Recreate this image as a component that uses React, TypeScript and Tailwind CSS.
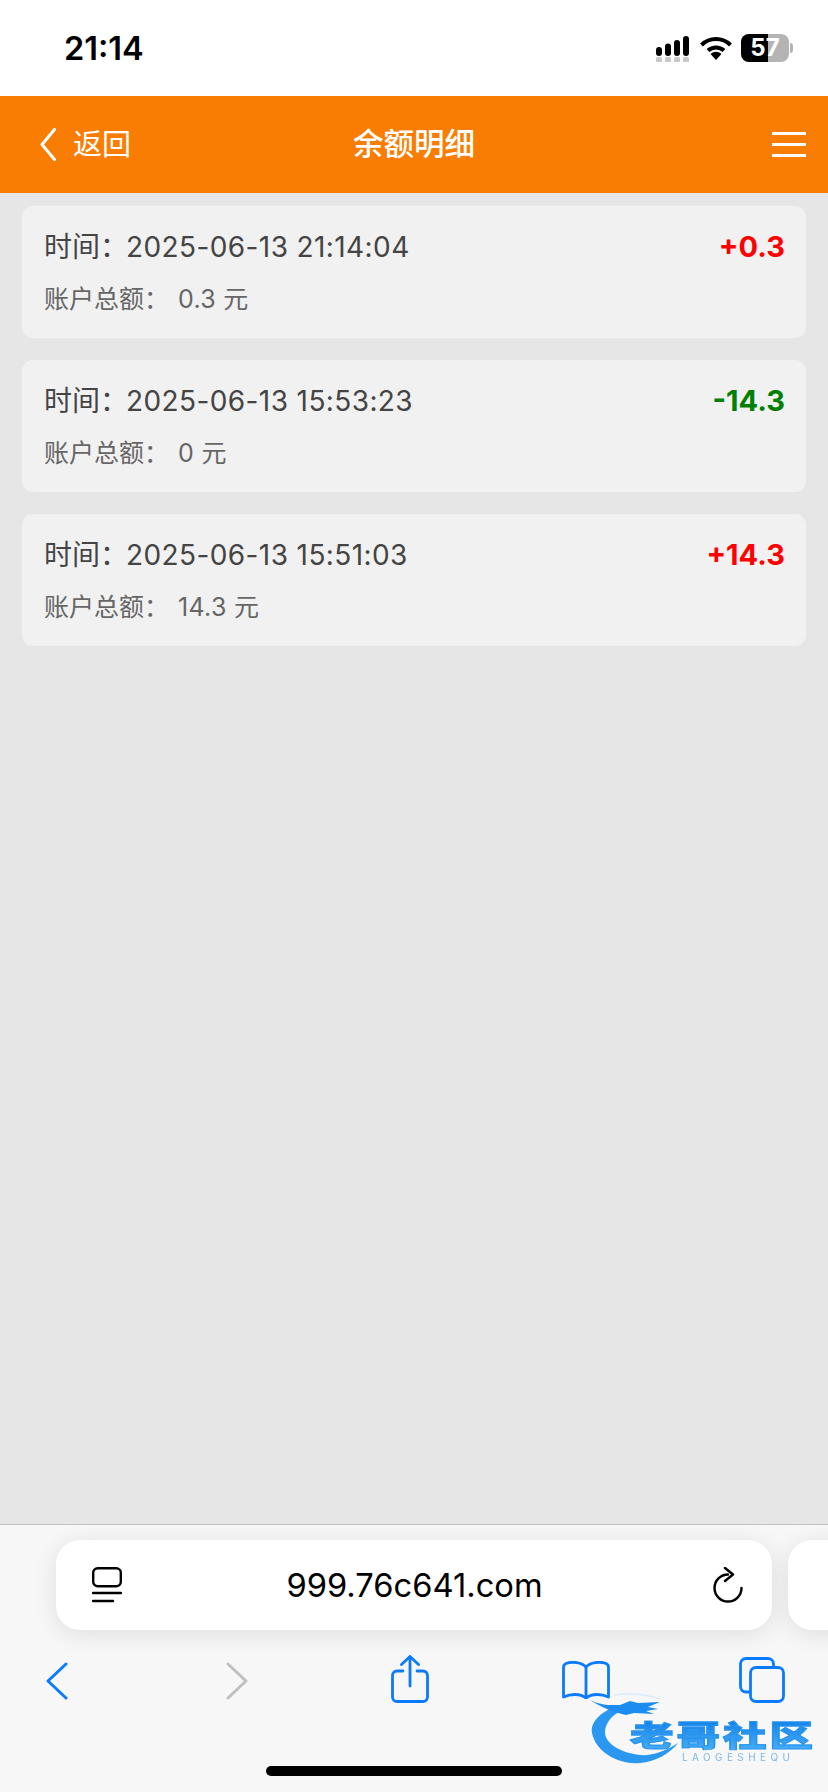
const records = [
  { time: "2025-06-13 21:14:04", amount: "+0.3", total: "0.3", up: true },
  { time: "2025-06-13 15:53:23", amount: "-14.3", total: "0", up: false },
  { time: "2025-06-13 15:51:03", amount: "+14.3", total: "14.3", up: true },
];

const fontStack = "font-['Inter','Noto_Sans_CJK_SC',sans-serif]";

function StatusIcons() {
  return (
    <div className="flex items-center">
      <svg width="33" height="26" viewBox="0 0 33 26" fill="#000" className="mt-[2px]">
        <rect x="0" y="11" width="6" height="9" rx="3" />
        <rect x="9" y="7.5" width="6" height="12.5" rx="3" />
        <rect x="18" y="4" width="6" height="16" rx="3" />
        <rect x="27" y="0" width="6" height="20" rx="3" />
        <g fill="#c8c8c8">
          <rect x="0" y="21" width="6" height="5.5" rx="1.5" />
          <rect x="9" y="21" width="6" height="5.5" rx="1.5" />
          <rect x="18" y="21" width="6" height="5.5" rx="1.5" />
          <rect x="27" y="21" width="6" height="5.5" rx="1.5" />
        </g>
      </svg>
      <svg width="32" height="24" viewBox="0 0 32 24" fill="none" stroke="#000" strokeWidth="4" className="ml-[11px]">
        <path d="M1.5 9 A20.5 20.5 0 0 1 30.5 9" />
        <path d="M8 14.5 A12 12 0 0 1 24 14.5" />
        <path d="M16 24 L10.5 18 A8 8 0 0 1 21.5 18 Z" fill="#000" stroke="none" />
      </svg>
      <div className="relative ml-[9px] flex h-[28px] w-[48px] items-center justify-center overflow-hidden rounded-[8px] bg-[#b4b4b4]">
        <div className="absolute inset-y-0 left-0 w-[27px] bg-black" />
        <span className="relative font-['Inter',sans-serif] text-[24px] leading-none font-bold text-white">57</span>
      </div>
      <div className="ml-[1px] h-[10px] w-[3px] rounded-r-full bg-[#b4b4b4]" />
    </div>
  );
}

function Watermark() {
  return (
    <div className="absolute top-[1693px] left-[590px] h-[74px] w-[224px] blur-[0.7px]">
      <svg width="100" height="74" viewBox="0 0 100 74" fill="none" className="absolute top-0 left-0">
        <path d="M30 12 C10 18 0 30 2 40 C6 60 30 72 50 70 C66 69 80 60 88 50 C76 58 62 63 50 62 C30 60 14 50 15 38 C16 28 24 20 36 16 Z" fill="#2a97f0" />
        <path d="M0 7 C12 13 22 12 30 12 L40 8 L48 10 L70 9 L58 14 L68 16 L56 18 L64 21 L44 20 L36 22 C26 20 10 14 0 7 Z" fill="#1d8cf0" />
        <path d="M24 2 C40 0 58 2 70 6" stroke="#dcebf8" strokeWidth="1.5" />
      </svg>
      <span className="absolute top-[26px] left-[40px] origin-left scale-x-[1.5] bg-gradient-to-b from-[#0b7fe8] to-[#43adf6] bg-clip-text font-['Noto_Sans_CJK_SC',sans-serif] text-[29px] leading-[30px] font-black tracking-[2px] whitespace-nowrap text-transparent [-webkit-text-stroke:1px_#2a93ee]">
        老哥社区
      </span>
      <span className="absolute top-[59px] left-[92px] font-['Inter',sans-serif] text-[10px] leading-[10px] tracking-[4.4px] whitespace-nowrap text-[#7db9ea]">
        LAOGESHEQU
      </span>
    </div>
  );
}

export default function App() {
  return (
    <div className={`relative flex h-[1792px] w-[828px] flex-col overflow-hidden bg-[#e6e6e6] ${fontStack}`}>
      <div className="flex h-[96px] shrink-0 items-center justify-between bg-white pr-[35px] pl-[64px]">
        <span className="mt-[2px] font-['Inter',sans-serif] text-[32.5px] leading-none font-semibold text-black">21:14</span>
        <StatusIcons />
      </div>

      <header className="relative flex h-[97px] shrink-0 items-center justify-between bg-[#f97d03] pr-[22px] pl-[40px] text-white">
        <div className="flex items-center gap-[17px]">
          <svg width="16" height="33" viewBox="0 0 16 33" fill="none" stroke="#fff" strokeWidth="3" strokeLinecap="round" strokeLinejoin="round">
            <path d="M14.5 1.5 L2 16.5 L14.5 31.5" />
          </svg>
          <span className="text-[29px] leading-none">返回</span>
        </div>
        <h1 className="absolute left-[353px] text-[30.5px] leading-none font-medium">余额明细</h1>
        <div className="flex w-[34px] flex-col gap-[8px]">
          <div className="h-[3px] bg-white" />
          <div className="h-[3px] bg-white" />
          <div className="h-[3px] bg-white" />
        </div>
      </header>

      <main className="flex flex-1 flex-col gap-[22px] px-[22px] pt-[13px]">
        {records.map((r) => (
          <div key={r.time} className="h-[132px] rounded-[11px] bg-[#f1f1f1] pt-[21px] pr-[21px] pl-[22px]">
            <div className="flex items-center justify-between">
              <span className="text-[28px] leading-[40px] text-[#444]">
                时间：<span className="-ml-[2px] tracking-[0.4px]">{r.time}</span>
              </span>
              <span className={`text-[29px] leading-[40px] font-bold ${r.up ? "text-[#ff0000]" : "text-[#008000]"}`}>
                {r.amount}
              </span>
            </div>
            <div className="mt-[16px] text-[25px] leading-[32px] text-[#666]">
              账户总额：<span className="ml-[9px] tracking-[0.3px]">{r.total} 元</span>
            </div>
          </div>
        ))}
      </main>

      <div className="h-[268px] shrink-0 border-t border-[#c4c4c4] bg-[#f7f7f7]">
        <div className="flex gap-[16px] pt-[15px] pl-[56px]">
          <div className="flex h-[90px] w-[716px] shrink-0 items-center justify-between rounded-[24px] bg-white pr-[29px] pl-[36px] shadow-[0_4px_24px_rgba(0,0,0,0.10)]">
            <svg width="30" height="36" viewBox="0 0 30 36" fill="none" stroke="#000" strokeWidth="2.4" strokeLinecap="round">
              <rect x="1.2" y="1.2" width="27.6" height="18" rx="4.5" />
              <path d="M1 26 H29" />
              <path d="M1 34 H21" />
            </svg>
            <span className="-ml-[6px] text-[32.7px] leading-none text-black">999.76c641.com</span>
            <svg width="30" height="37" viewBox="0 0 30 37" fill="none" stroke="#000" strokeWidth="2.4" strokeLinecap="round" strokeLinejoin="round">
              <path d="M15 7.5 A13.5 13.5 0 1 0 28.5 21" />
              <path d="M12 1 L20 7.5 L12 14" />
            </svg>
          </div>
          <div className="h-[90px] w-[80px] shrink-0 rounded-[24px] bg-white shadow-[0_4px_24px_rgba(0,0,0,0.10)]" />
        </div>

        <div className="mt-[25px] grid grid-cols-[180px_173px_172px_176px_40px] pl-[37px]">
          <div className="flex h-[48px] w-[40px] justify-center pt-[7px]">
            <svg width="22" height="38" viewBox="0 0 22 38" fill="none" stroke="#0a7aff" strokeWidth="3" strokeLinecap="round" strokeLinejoin="round">
              <path d="M20 2 L2 19 L20 36" />
            </svg>
          </div>
          <div className="flex h-[48px] w-[40px] justify-center pt-[7px]">
            <svg width="22" height="38" viewBox="0 0 22 38" fill="none" stroke="#c0c0c0" strokeWidth="3" strokeLinecap="round" strokeLinejoin="round">
              <path d="M2 2 L20 19 L2 36" />
            </svg>
          </div>
          <div className="flex h-[48px] w-[40px] justify-center">
            <svg width="38" height="48" viewBox="0 0 38 48" fill="none" stroke="#0a7aff" strokeWidth="2.8" strokeLinecap="round" strokeLinejoin="round">
              <path d="M12 16 H6 A4.5 4.5 0 0 0 1.5 20.5 V42 A4.5 4.5 0 0 0 6 46.5 H32 A4.5 4.5 0 0 0 36.5 42 V20.5 A4.5 4.5 0 0 0 32 16 H26" />
              <path d="M19 31 V2" />
              <path d="M10.5 9.5 L19 1.5 L27.5 9.5" />
            </svg>
          </div>
          <div className="flex h-[48px] w-[48px] justify-center pt-[6px]">
            <svg width="48" height="38" viewBox="0 0 48 38" fill="none" stroke="#0a7aff" strokeWidth="2.8" strokeLinecap="round" strokeLinejoin="round" className="shrink-0">
              <path d="M24 6 C20 1.5 10 0 4 2.5 C2.5 3.2 1.5 4.5 1.5 6.5 V36 C8 33 18 32 24 37 C30 32 40 33 46.5 36 V6.5 C46.5 4.5 45.5 3.2 44 2.5 C38 0 28 1.5 24 6 Z" />
              <path d="M24 6 V37" />
            </svg>
          </div>
          <div className="flex h-[48px] w-[48px] justify-center pt-[2px]">
            <svg width="46" height="46" viewBox="0 0 46 46" fill="none" stroke="#0a7aff" strokeWidth="2.8" strokeLinecap="round" strokeLinejoin="round" className="shrink-0">
              <path d="M11 35 H7 A5.5 5.5 0 0 1 1.5 29.5 V7 A5.5 5.5 0 0 1 7 1.5 H29 A5.5 5.5 0 0 1 34.5 7 V10" />
              <rect x="11.5" y="10.5" width="33" height="34" rx="5.5" />
            </svg>
          </div>
        </div>

        <div className="mt-[63px] ml-[266px] h-[10px] w-[296px] rounded-full bg-black" />
      </div>

      <Watermark />
    </div>
  );
}
